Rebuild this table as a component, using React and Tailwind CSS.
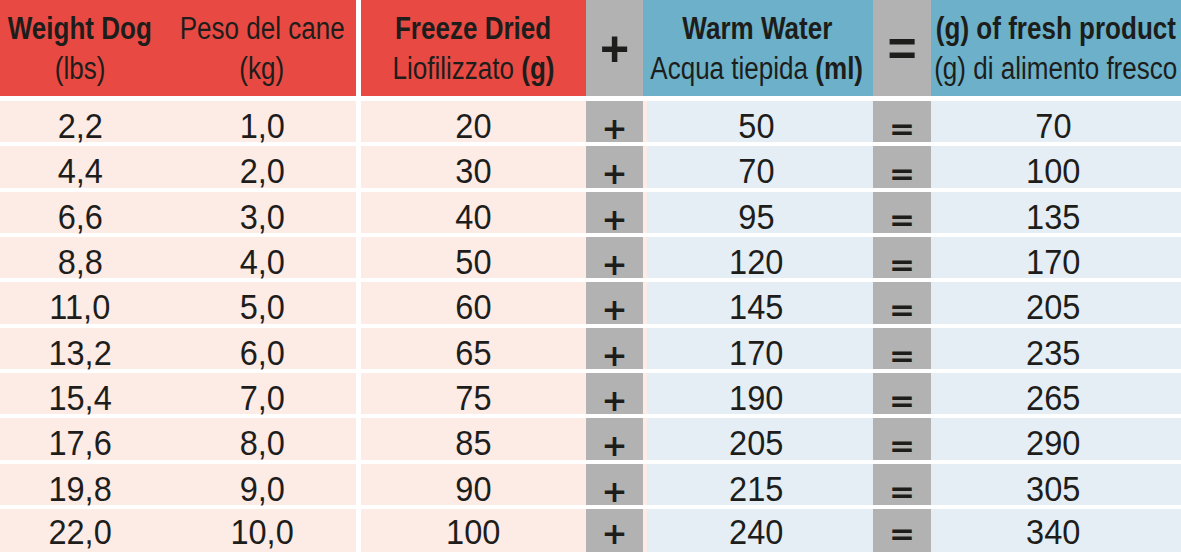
import React from "react";

const rows = [
  ["2,2", "1,0", "20", "50", "70"],
  ["4,4", "2,0", "30", "70", "100"],
  ["6,6", "3,0", "40", "95", "135"],
  ["8,8", "4,0", "50", "120", "170"],
  ["11,0", "5,0", "60", "145", "205"],
  ["13,2", "6,0", "65", "170", "235"],
  ["15,4", "7,0", "75", "190", "265"],
  ["17,6", "8,0", "85", "205", "290"],
  ["19,8", "9,0", "90", "215", "305"],
  ["22,0", "10,0", "100", "240", "340"],
];

function Num({ children, last }) {
  return (
    <span
      className={
        last
          ? "block text-[35px] leading-none scale-x-[0.93] translate-y-[1px] whitespace-nowrap"
          : "block text-[35px] leading-none scale-x-[0.93] translate-y-[4px] whitespace-nowrap"
      }
    >
      {children}
    </span>
  );
}

function Sym({ children, last }) {
  return (
    <span
      className={
        last
          ? "block font-['DejaVu_Sans',sans-serif] text-[31px] font-bold leading-none translate-y-[3px]"
          : "block font-['DejaVu_Sans',sans-serif] text-[31px] font-bold leading-none translate-y-[7px]"
      }
    >
      {children}
    </span>
  );
}

function HeadLines({ top, bottom }) {
  return (
    <div className="flex flex-col items-center justify-center leading-[40px] text-[31px] pt-[2px] h-full w-full">
      <span className="block scale-x-[0.84] whitespace-nowrap">{top}</span>
      <span className="block scale-x-[0.84] whitespace-nowrap">{bottom}</span>
    </div>
  );
}

export default function App() {
  return (
    <div className="w-[1181px] h-[552px] overflow-hidden bg-white flex flex-col gap-[4px] text-[#1d1d1b] font-['Liberation_Sans',Arial,sans-serif]">
      {/* Header */}
      <div className="h-[96px] shrink-0 mb-[1px] flex">
        <div className="w-[356px] shrink-0 flex bg-[#e84a43]">
          <div className="w-[160px] shrink-0">
            <HeadLines top={<b>Weight Dog</b>} bottom="(lbs)" />
          </div>
          <div className="flex-1 min-w-0 pl-[8px]">
            <HeadLines top="Peso del cane" bottom="(kg)" />
          </div>
        </div>
        <div className="ml-[5px] w-[225px] shrink-0 bg-[#e84a43]">
          <HeadLines
            top={<b>Freeze Dried</b>}
            bottom={
              <>
                Liofilizzato <b>(g)</b>
              </>
            }
          />
        </div>
        <div className="w-[57px] shrink-0 bg-[#b2b2b2] flex items-center justify-center">
          <span className="block text-[50px] font-bold leading-none translate-y-[1px]">+</span>
        </div>
        <div className="w-[230px] shrink-0 bg-[#6cb1c9] pr-[2px]">
          <HeadLines
            top={<b>Warm Water</b>}
            bottom={
              <>
                Acqua tiepida <b>(ml)</b>
              </>
            }
          />
        </div>
        <div className="w-[58px] shrink-0 bg-[#b2b2b2] flex items-center justify-center">
          <span className="block text-[50px] font-bold leading-none translate-y-[1px]">=</span>
        </div>
        <div className="flex-1 min-w-0 bg-[#6cb1c9]">
          <HeadLines top={<b>(g) of fresh product</b>} bottom="(g) di alimento fresco" />
        </div>
      </div>

      {/* Body rows */}
      {rows.map((r, i) => {
        const last = i === rows.length - 1;
        return (
          <div
            key={i}
            className={last ? "flex-1 min-h-0 flex" : "h-[41.33px] shrink-0 flex"}
          >
            <div className="w-[356px] shrink-0 flex bg-[#fdebe6]">
              <div className="w-[160px] shrink-0 flex items-center justify-center">
                <Num last={last}>{r[0]}</Num>
              </div>
              <div className="flex-1 min-w-0 pl-[8px] flex items-center justify-center">
                <Num last={last}>{r[1]}</Num>
              </div>
            </div>
            <div className="ml-[5px] w-[225px] shrink-0 bg-[#fdebe6] flex items-center justify-center">
              <Num last={last}>{r[2]}</Num>
            </div>
            <div className="w-[57px] shrink-0 bg-[#b2b2b2] flex items-center justify-center">
              <Sym last={last}>+</Sym>
            </div>
            <div className="w-[230px] shrink-0 bg-[#e5eef5] border-l-[4px] border-[#fdebe6] pr-[8px] flex items-center justify-center">
              <Num last={last}>{r[3]}</Num>
            </div>
            <div className="w-[58px] shrink-0 bg-[#b2b2b2] flex items-center justify-center">
              <Sym last={last}>=</Sym>
            </div>
            <div className="flex-1 min-w-0 bg-[#e5eef5] pr-[6px] flex items-center justify-center">
              <Num last={last}>{r[4]}</Num>
            </div>
          </div>
        );
      })}
    </div>
  );
}
